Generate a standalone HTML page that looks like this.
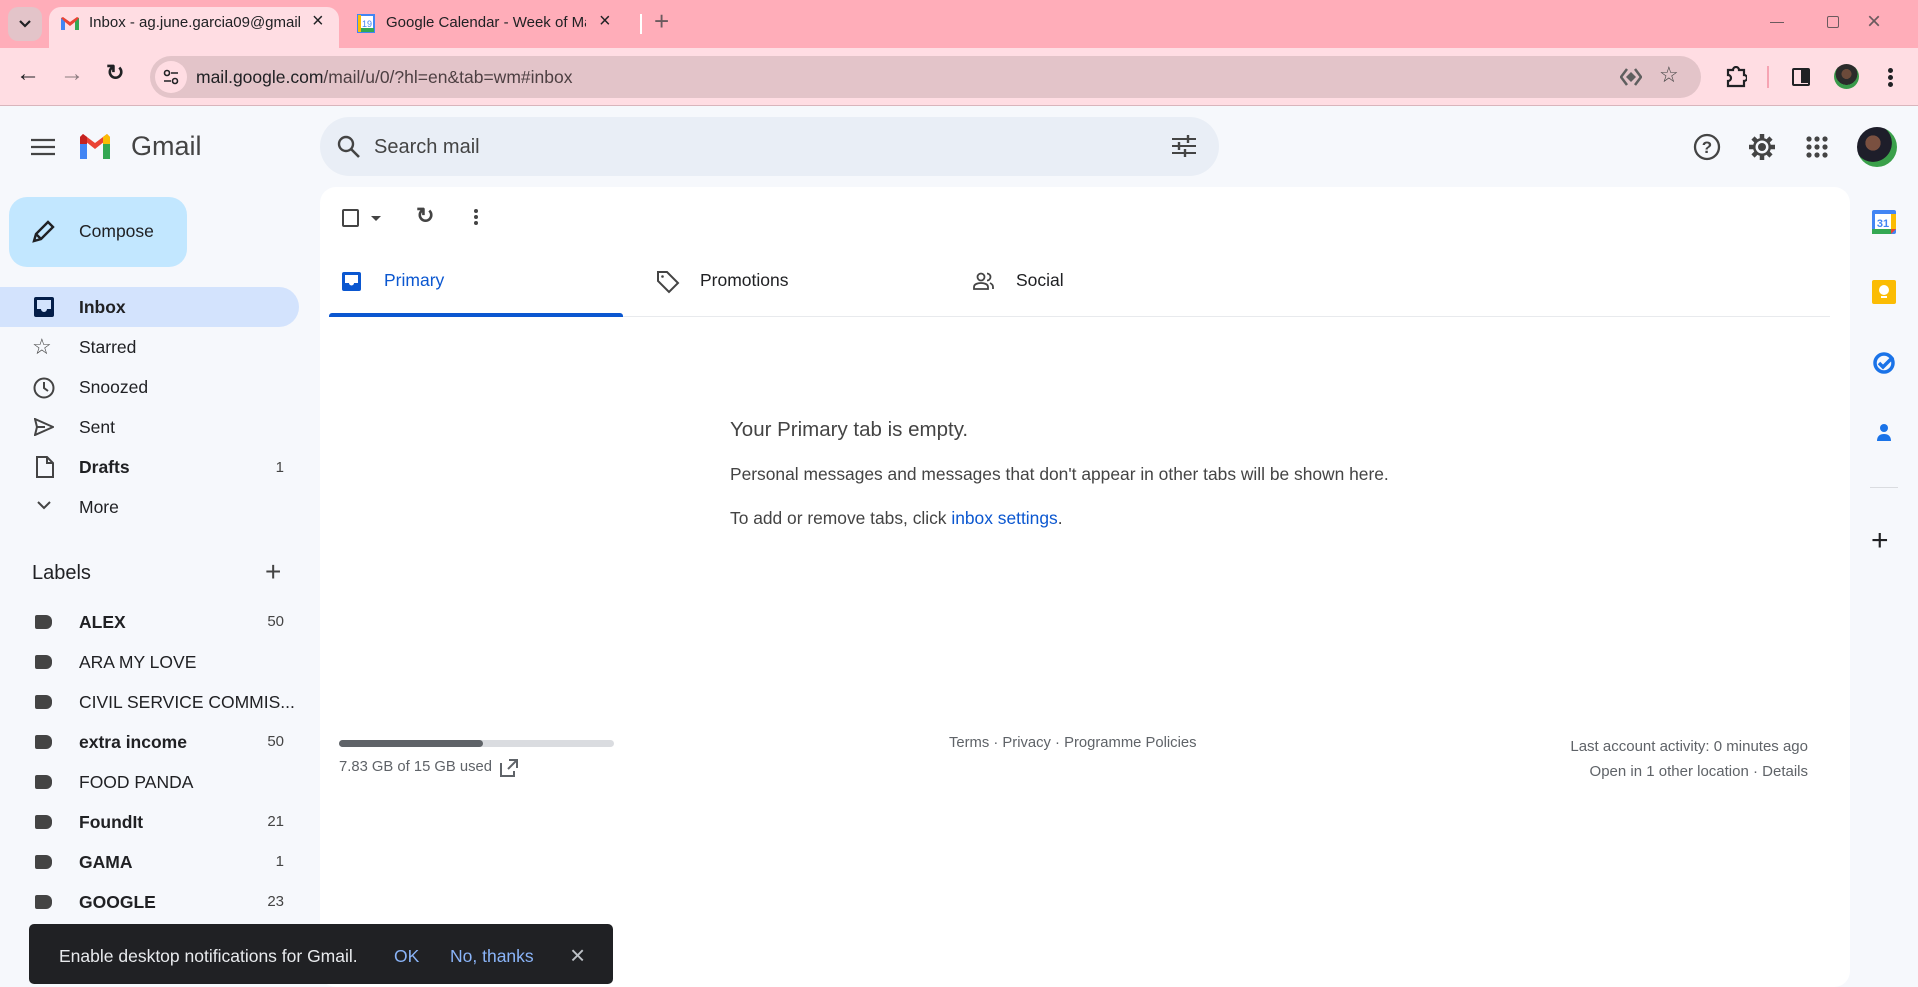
<!DOCTYPE html>
<html><head><meta charset="utf-8"><style>
*{box-sizing:border-box;margin:0;padding:0}
body{width:1918px;height:975px;overflow:hidden;position:relative;background:#f6f8fc;font-family:"Liberation Sans",Arial,sans-serif;color:#202124}
.a{position:absolute}
.tabbar{left:0;top:0;width:1918px;height:48px;background:#ffadb9}
.tool{left:0;top:48px;width:1918px;height:58px;background:#ffdde3;border-bottom:1px solid #d9b5bc}
.nav{font-size:17.5px;color:#202124}
.lbl{font-size:17.5px}
.cnt{font-size:15px;color:#444;right:0;text-align:right}
svg{display:block}
</style></head><body>
<div class="a tabbar"></div>
<div class="a" style="left:8px;top:7px;width:34px;height:34px;border-radius:10px;background:#e3c4c9"></div>
<svg class="a" style="left:17px;top:17px" width="16" height="14"><path d="M3 4l5 5 5-5" stroke="#202124" stroke-width="2.2" fill="none"/></svg>
<div class="a" style="left:49px;top:7px;width:290px;height:41px;background:#ffdde3;border-radius:12px 12px 0 0"></div>
<svg class="a" style="left:60px;top:16px" width="20" height="15" viewBox="0 0 20 15"><path d="M1 2v12h4V6l5 4 5-4v8h4V2l-2-1-7 5-7-5z" fill="#ea4335"/><path d="M1 2v12h4V6z" fill="#4285f4"/><path d="M15 6v8h4V2z" fill="#34a853"/></svg>
<div class="a" style="left:89px;top:14px;font-size:15px;color:#202124;white-space:nowrap;width:215px;overflow:hidden">Inbox - ag.june.garcia09@gmail</div>
<div class="a" style="left:312px;top:10px;font-size:20px;color:#202124">×</div>
<svg class="a" style="left:357px;top:14px" width="18" height="19"><rect x="1" y="1" width="16" height="17" fill="#fff" stroke="#4285f4" stroke-width="2"/><rect x="1" y="14" width="16" height="4" fill="#34a853"/><rect x="1" y="1" width="3" height="17" fill="#fbbc04"/><text x="5" y="13" font-size="9" fill="#4285f4" font-family="Liberation Sans">19</text></svg>
<div class="a" style="left:386px;top:14px;font-size:15px;color:#202124;white-space:nowrap;width:200px;overflow:hidden">Google Calendar - Week of Mar</div>
<div class="a" style="left:599px;top:10px;font-size:20px;color:#202124">×</div>
<div class="a" style="left:640px;top:14px;width:2px;height:20px;background:#fff"></div>
<div class="a" style="left:654px;top:6px;font-size:26px;color:#6b5a5e">+</div>
<div class="a" style="left:1770px;top:22px;width:14px;height:1px;background:#6b5a5e"></div>
<div class="a" style="left:1827px;top:16px;width:12px;height:12px;border:1px solid #6b5a5e;border-radius:2px"></div>
<div class="a" style="left:1867px;top:8px;font-size:24px;color:#6b5a5e;font-weight:300">×</div>

<div class="a tool"></div>
<div class="a" style="left:16px;top:60px;font-size:24px;color:#202124">←</div>
<div class="a" style="left:60px;top:60px;font-size:24px;color:#8a7a7e">→</div>
<div class="a" style="left:106px;top:60px;font-size:22px;color:#202124;font-weight:bold">↻</div>
<div class="a" style="left:150px;top:56px;width:1551px;height:42px;border-radius:21px;background:#e3c4c9"></div>
<div class="a" style="left:155px;top:61px;width:32px;height:32px;border-radius:16px;background:#ffdde3"></div>
<svg class="a" style="left:162px;top:68px" width="18" height="18"><circle cx="5" cy="5" r="2.5" fill="none" stroke="#202124" stroke-width="1.6"/><path d="M9 5h7M2 13h7" stroke="#202124" stroke-width="1.6"/><circle cx="13" cy="13" r="2.5" fill="none" stroke="#202124" stroke-width="1.6"/></svg>
<div class="a" style="left:196px;top:67px;font-size:17.5px;color:#202124">mail.google.com<span style="color:#4d3f42">/mail/u/0/?hl=en&amp;tab=wm#inbox</span></div>
<svg class="a" style="left:1620px;top:68px" width="22" height="18"><path d="M7 1l-6 8 6 8M15 1l6 8-6 8" stroke="#5f5f5f" stroke-width="2.5" fill="none"/><path d="M11 4l5 5-5 5-5-5z" fill="#5f5f5f"/></svg>
<div class="a" style="left:1659px;top:62px;font-size:22px;color:#444">☆</div>
<svg class="a" style="left:1725px;top:66px" width="22" height="22"><path d="M3 4h5a3 3 0 0 1 6 0h5v5a3 3 0 0 1 0 6v5H3v-5a3 3 0 0 0 0-6z" fill="none" stroke="#202124" stroke-width="2.2"/></svg>
<div class="a" style="left:1767px;top:66px;width:2px;height:22px;background:#f6a4b3"></div>
<div class="a" style="left:1792px;top:68px;width:18px;height:18px;border:2.5px solid #202124;border-radius:2px"><div style="position:absolute;right:0;top:0;width:7px;height:13px;background:#202124"></div></div>
<div class="a" style="left:1834px;top:64px;width:25px;height:25px;border-radius:50%;background:radial-gradient(circle at 50% 40%,#6b4a3a 0 25%,#2b2b2b 26% 55%,#3a9a4a 56%)"></div>
<div class="a" style="left:1888px;top:68px;width:5px;height:5px;border-radius:50%;background:#202124;box-shadow:0 7px 0 #202124,0 14px 0 #202124"></div>

<!-- gmail header -->
<svg class="a" style="left:31px;top:138px" width="24" height="18"><path d="M0 2h24M0 9h24M0 16h24" stroke="#444" stroke-width="2.2"/></svg>
<svg class="a" style="left:80px;top:133px" width="30" height="28" viewBox="0 0 30 28"><path d="M0 4v22h7V11z" fill="#4285f4"/><path d="M23 11v15h7V4z" fill="#34a853"/><path d="M0 4l15 12 15-12-3-3-12 9L3 1z" fill="#ea4335"/><path d="M23 4l4-3 3 3v7h-7z" fill="#fbbc04"/><path d="M0 4l3-3 4 3v7H0z" fill="#c5221f"/></svg>
<div class="a" style="left:131px;top:131px;font-size:27px;color:#444">Gmail</div>
<div class="a" style="left:320px;top:117px;width:899px;height:59px;border-radius:30px;background:#e9eef6"></div>
<svg class="a" style="left:336px;top:134px" width="26" height="26"><circle cx="10" cy="10" r="7" fill="none" stroke="#444" stroke-width="2.4"/><path d="M15 15l8 8" stroke="#444" stroke-width="2.6"/></svg>
<div class="a" style="left:374px;top:136px;font-size:20px;color:#444">Search mail</div>
<svg class="a" style="left:1172px;top:135px" width="24" height="22"><path d="M0 4h24M0 11h24M0 18h24" stroke="#444" stroke-width="2"/><path d="M16 0v8M7 7v8M13 14v8" stroke="#444" stroke-width="2.4"/></svg>
<svg class="a" style="left:1693px;top:133px" width="28" height="28"><circle cx="14" cy="14" r="12" fill="none" stroke="#444" stroke-width="2.3"/><text x="14" y="20" text-anchor="middle" font-size="17" font-weight="bold" fill="#444" font-family="Liberation Sans">?</text></svg>
<svg class="a" style="left:1748px;top:133px" width="28" height="28" viewBox="0 0 28 28"><g stroke="#444" stroke-width="4.5"><path d="M14 1v26M1 14h26M5 5l18 18M23 5L5 23"/></g><circle cx="14" cy="14" r="9" fill="#444"/><circle cx="14" cy="14" r="6.5" fill="#f6f8fc"/><circle cx="14" cy="14" r="4" fill="#444"/></svg>
<svg class="a" style="left:1806px;top:136px" width="22" height="22"><g fill="#444"><circle cx="3" cy="3" r="2.6"/><circle cx="11" cy="3" r="2.6"/><circle cx="19" cy="3" r="2.6"/><circle cx="3" cy="11" r="2.6"/><circle cx="11" cy="11" r="2.6"/><circle cx="19" cy="11" r="2.6"/><circle cx="3" cy="19" r="2.6"/><circle cx="11" cy="19" r="2.6"/><circle cx="19" cy="19" r="2.6"/></g></svg>
<div class="a" style="left:1857px;top:127px;width:40px;height:40px;border-radius:50%;background:radial-gradient(circle at 40% 40%,#7a5040 0 22%,#1e1e2a 23% 55%,#3aa04a 56% 75%,#cfd6cf 76%)"></div>

<!-- sidebar -->
<div class="a" style="left:9px;top:197px;width:178px;height:70px;border-radius:18px;background:#c2e7ff"></div>
<svg class="a" style="left:30px;top:219px" width="26" height="26"><path d="M4 22l2-7L18 3l5 5-12 12z M6 15l5 5" fill="none" stroke="#202124" stroke-width="2.4"/></svg>
<div class="a" style="left:79px;top:221px;font-size:17.5px;color:#202124">Compose</div>
<div class="a" style="left:0;top:287px;width:299px;height:40px;border-radius:0 20px 20px 0;background:#d3e3fd"></div>
<svg class="a" style="left:34px;top:297px" width="20" height="20"><rect x="0" y="0" width="20" height="20" rx="2" fill="#041e49"/><path d="M3 3h14v9h-4a3 3 0 0 1-6 0H3z" fill="#d3e3fd"/></svg>
<div class="a nav" style="left:79px;top:297px;font-weight:bold">Inbox</div>
<div class="a" style="left:32px;top:334px;font-size:22px;color:#444">☆</div>
<div class="a nav" style="left:79px;top:337px">Starred</div>
<svg class="a" style="left:33px;top:377px" width="22" height="22"><circle cx="11" cy="11" r="9.5" fill="none" stroke="#444" stroke-width="2"/><path d="M11 5v6l4 3" fill="none" stroke="#444" stroke-width="2"/></svg>
<div class="a nav" style="left:79px;top:377px">Snoozed</div>
<svg class="a" style="left:34px;top:418px" width="20" height="18"><path d="M1 1l18 8-18 8 2-8z M3 9h8" fill="none" stroke="#444" stroke-width="2"/></svg>
<div class="a nav" style="left:79px;top:417px">Sent</div>
<svg class="a" style="left:36px;top:456px" width="18" height="22"><path d="M1 1h10l6 6v14H1z M11 1v6h6" fill="none" stroke="#444" stroke-width="2"/></svg>
<div class="a nav" style="left:79px;top:457px;font-weight:bold">Drafts</div>
<div class="a cnt" style="left:220px;width:64px;top:459px">1</div>
<svg class="a" style="left:36px;top:500px" width="16" height="12"><path d="M2 2l6 6 6-6" fill="none" stroke="#444" stroke-width="2"/></svg>
<div class="a nav" style="left:79px;top:497px">More</div>

<div class="a" style="left:32px;top:562px;font-size:20px;color:#202124">Labels</div>
<div class="a" style="left:265px;top:556px;font-size:28px;color:#444;font-weight:300">+</div>

<div class="a" style="left:0;top:611px;width:300px">
<div style="position:relative;height:40px"><div class="a" style="left:35px;top:4px;width:17px;height:14px;background:#444;border-radius:2px 6px 6px 2px"></div><div class="a lbl" style="left:79px;top:1px;font-weight:bold">ALEX</div><div class="a cnt" style="left:220px;width:64px;top:2px">50</div></div>
<div style="position:relative;height:40px"><div class="a" style="left:35px;top:4px;width:17px;height:14px;background:#444;border-radius:2px 6px 6px 2px"></div><div class="a lbl" style="left:79px;top:1px">ARA MY LOVE</div></div>
<div style="position:relative;height:40px"><div class="a" style="left:35px;top:4px;width:17px;height:14px;background:#444;border-radius:2px 6px 6px 2px"></div><div class="a lbl" style="left:79px;top:1px">CIVIL SERVICE COMMIS...</div></div>
<div style="position:relative;height:40px"><div class="a" style="left:35px;top:4px;width:17px;height:14px;background:#444;border-radius:2px 6px 6px 2px"></div><div class="a lbl" style="left:79px;top:1px;font-weight:bold">extra income</div><div class="a cnt" style="left:220px;width:64px;top:2px">50</div></div>
<div style="position:relative;height:40px"><div class="a" style="left:35px;top:4px;width:17px;height:14px;background:#444;border-radius:2px 6px 6px 2px"></div><div class="a lbl" style="left:79px;top:1px">FOOD PANDA</div></div>
<div style="position:relative;height:40px"><div class="a" style="left:35px;top:4px;width:17px;height:14px;background:#444;border-radius:2px 6px 6px 2px"></div><div class="a lbl" style="left:79px;top:1px;font-weight:bold">FoundIt</div><div class="a cnt" style="left:220px;width:64px;top:2px">21</div></div>
<div style="position:relative;height:40px"><div class="a" style="left:35px;top:4px;width:17px;height:14px;background:#444;border-radius:2px 6px 6px 2px"></div><div class="a lbl" style="left:79px;top:1px;font-weight:bold">GAMA</div><div class="a cnt" style="left:220px;width:64px;top:2px">1</div></div>
<div style="position:relative;height:40px"><div class="a" style="left:35px;top:4px;width:17px;height:14px;background:#444;border-radius:2px 6px 6px 2px"></div><div class="a lbl" style="left:79px;top:1px;font-weight:bold">GOOGLE</div><div class="a cnt" style="left:220px;width:64px;top:2px">23</div></div>
</div>

<!-- main panel -->
<div class="a" style="left:320px;top:187px;width:1530px;height:800px;background:#fff;border-radius:16px"></div>
<div class="a" style="left:342px;top:209px;width:17px;height:18px;border:2px solid #444;border-radius:2px"></div>
<div class="a" style="left:371px;top:216px;width:0;height:0;border-left:5px solid transparent;border-right:5px solid transparent;border-top:5px solid #444"></div>
<div class="a" style="left:416px;top:203px;font-size:22px;color:#444;font-weight:bold">↻</div>
<div class="a" style="left:474px;top:209px;width:4px;height:4px;border-radius:50%;background:#444;box-shadow:0 6px 0 #444,0 12px 0 #444"></div>

<svg class="a" style="left:342px;top:272px" width="19" height="19"><rect width="19" height="19" rx="2" fill="#0b57d0"/><path d="M3 3h13v8h-4a2.5 2.5 0 0 1-5 0H3z" fill="#fff"/></svg>
<div class="a" style="left:384px;top:270px;font-size:17.5px;color:#0b57d0">Primary</div>
<div class="a" style="left:329px;top:313px;width:294px;height:4px;background:#0b57d0;border-radius:3px 3px 0 0"></div>
<svg class="a" style="left:656px;top:270px" width="24" height="24"><path d="M2 2h9l11 11-9 9L2 11z" fill="none" stroke="#444" stroke-width="2"/><circle cx="6.5" cy="6.5" r="1.3" fill="#444"/></svg>
<div class="a" style="left:700px;top:270px;font-size:17.5px;color:#202124">Promotions</div>
<svg class="a" style="left:973px;top:272px" width="22" height="18"><circle cx="8" cy="5" r="3.5" fill="none" stroke="#444" stroke-width="1.8"/><path d="M1 17v-2c0-3 4-4 7-4s7 1 7 4v2z" fill="none" stroke="#444" stroke-width="1.8"/><path d="M14 1.5a3.5 3.5 0 0 1 0 7M17 11c2 1 3 2 3 4v2" fill="none" stroke="#444" stroke-width="1.8"/></svg>
<div class="a" style="left:1016px;top:270px;font-size:17.5px;color:#202124">Social</div>
<div class="a" style="left:623px;top:316px;width:1207px;height:1px;background:#e8eaed"></div>

<div class="a" style="left:730px;top:418px;font-size:20.5px;color:#444">Your Primary tab is empty.</div>
<div class="a" style="left:730px;top:464px;font-size:17.4px;color:#444">Personal messages and messages that don't appear in other tabs will be shown here.</div>
<div class="a" style="left:730px;top:508px;font-size:17.4px;color:#444">To add or remove tabs, click <span style="color:#0b57d0">inbox settings</span>.</div>

<div class="a" style="left:339px;top:740px;width:275px;height:7px;border-radius:4px;background:#dadce0"><div style="width:144px;height:7px;border-radius:4px;background:#5f6368"></div></div>
<div class="a" style="left:339px;top:759px;font-size:14.8px;color:#5f6368">7.83 GB of 15 GB used</div>
<svg class="a" style="left:500px;top:759px" width="18" height="18"><path d="M1 4v13h13v-5M9 1h8v8M17 1L8 10" fill="none" stroke="#5f6368" stroke-width="2"/></svg>
<div class="a" style="left:949px;top:735px;font-size:14.8px;color:#5f6368">Terms · Privacy · Programme Policies</div>
<div class="a" style="left:1400px;width:408px;text-align:right;top:734px;font-size:15px;color:#5f6368;line-height:25px">Last account activity: 0 minutes ago<br>Open in 1 other location · Details</div>

<!-- right side panel -->
<svg class="a" style="left:1872px;top:210px" width="24" height="24"><rect x="0" y="0" width="24" height="24" rx="2" fill="#4285f4"/><rect x="3" y="4" width="18" height="15" fill="#fff"/><rect x="0" y="19" width="19" height="5" fill="#34a853"/><rect x="19" y="4" width="5" height="15" fill="#fbbc04"/><path d="M19 19h5l-5 5z" fill="#ea4335"/><text x="11" y="17" text-anchor="middle" font-size="11" font-weight="bold" fill="#4285f4" font-family="Liberation Sans">31</text></svg>
<svg class="a" style="left:1872px;top:280px" width="24" height="24"><rect width="24" height="24" rx="2" fill="#fbbc04"/><circle cx="12" cy="10" r="5" fill="#fff"/><rect x="9" y="16" width="6" height="2" fill="#fff"/></svg>
<svg class="a" style="left:1873px;top:352px" width="22" height="22"><circle cx="11" cy="11" r="9" fill="none" stroke="#1a73e8" stroke-width="3.5"/><path d="M6 11l4 4 10-10" fill="none" stroke="#1a73e8" stroke-width="3.5"/></svg>
<svg class="a" style="left:1875px;top:421px" width="18" height="22"><circle cx="9" cy="7" r="4" fill="#1a73e8"/><path d="M2 20c0-5 3-7 7-7s7 2 7 7z" fill="#1a73e8"/></svg>
<div class="a" style="left:1870px;top:487px;width:28px;height:1px;background:#dadce0"></div>
<div class="a" style="left:1871px;top:524px;font-size:30px;color:#202124;font-weight:300">+</div>

<!-- snackbar -->
<div class="a" style="left:29px;top:924px;width:584px;height:60px;border-radius:5px;background:#202124"></div>
<div class="a" style="left:59px;top:946px;font-size:17.5px;color:#e8eaed">Enable desktop notifications for Gmail.</div>
<div class="a" style="left:394px;top:946px;font-size:17.5px;color:#8ab4f8">OK</div>
<div class="a" style="left:450px;top:946px;font-size:17.5px;color:#8ab4f8">No, thanks</div>
<div class="a" style="left:570px;top:940px;font-size:26px;color:#bdc1c6">×</div>
</body></html>
